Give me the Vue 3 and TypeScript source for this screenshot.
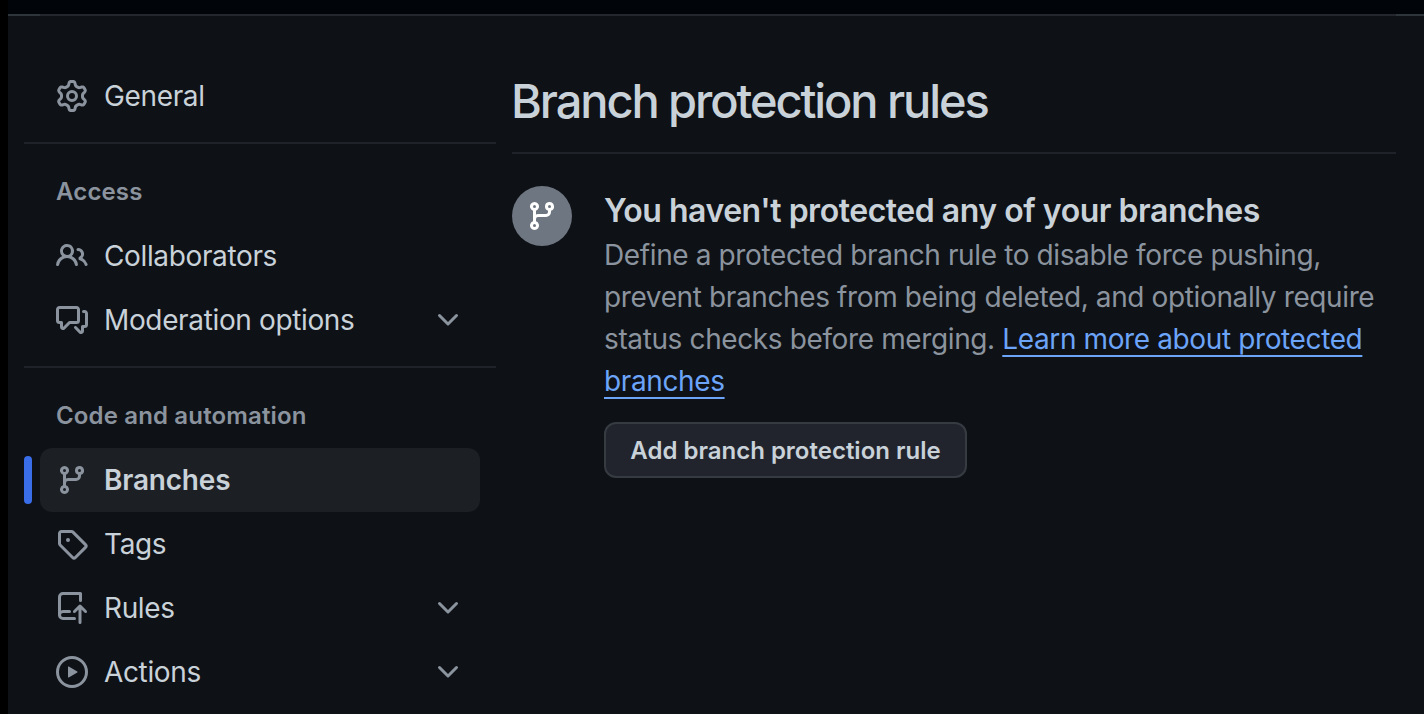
<script setup lang="ts">
interface NavItem {
  label: string
  icon: string
  expandable?: boolean
  active?: boolean
}
interface NavGroup {
  title?: string
  items: NavItem[]
}

const branch =
  'M9.5 3.25a2.25 2.25 0 1 1 3 2.122V6A2.5 2.5 0 0 1 10 8.5H6a1 1 0 0 0-1 1v1.128a2.251 2.251 0 1 1-1.5 0V5.372a2.25 2.25 0 1 1 1.5 0v1.836A2.493 2.493 0 0 1 6 7h4a1 1 0 0 0 1-1v-.628A2.25 2.25 0 0 1 9.5 3.25Zm-6 0a.75.75 0 1 0 1.5 0 .75.75 0 0 0-1.5 0Zm8.25-.75a.75.75 0 1 0 0 1.5.75.75 0 0 0 0-1.5ZM4.25 12a.75.75 0 1 0 0 1.5.75.75 0 0 0 0-1.5Z'
const gear =
  'M8 0a8.2 8.2 0 0 1 .701.031C9.444.095 9.99.645 10.16 1.29l.288 1.107c.018.066.079.158.212.224.231.114.454.243.668.386.123.082.233.09.299.071l1.103-.303c.644-.176 1.392.021 1.82.63.27.385.506.792.704 1.218.315.675.111 1.422-.364 1.891l-.814.806c-.049.048-.098.147-.088.294.016.257.016.515 0 .772-.01.147.038.246.088.294l.814.806c.475.469.679 1.216.364 1.891a7.977 7.977 0 0 1-.704 1.217c-.428.61-1.176.807-1.82.63l-1.102-.302c-.067-.019-.177-.011-.3.071a5.909 5.909 0 0 1-.668.386c-.133.066-.194.158-.211.224l-.29 1.106c-.168.646-.715 1.196-1.458 1.26a8.006 8.006 0 0 1-1.402 0c-.743-.064-1.289-.614-1.458-1.26l-.289-1.106c-.018-.066-.079-.158-.212-.224a5.738 5.738 0 0 1-.668-.386c-.123-.082-.233-.09-.299-.071l-1.103.303c-.644.176-1.392-.021-1.82-.63a8.12 8.12 0 0 1-.704-1.218c-.315-.675-.111-1.422.363-1.891l.815-.806c.05-.048.098-.147.088-.294a6.214 6.214 0 0 1 0-.772c.01-.147-.038-.246-.088-.294l-.815-.806C.635 6.045.431 5.298.746 4.623a7.92 7.92 0 0 1 .704-1.217c.428-.61 1.176-.807 1.82-.63l1.102.302c.067.019.177.011.3-.071.214-.143.437-.272.668-.386.133-.066.194-.158.211-.224l.29-1.106C6.009.645 6.556.095 7.299.03 7.53.01 7.764 0 8 0Zm-.571 1.525c-.036.003-.108.036-.137.146l-.289 1.105c-.147.561-.549.967-.998 1.189-.173.086-.34.183-.5.29-.417.278-.97.423-1.529.27l-1.103-.303c-.109-.03-.175.016-.195.045-.22.312-.412.644-.573.99-.014.031-.021.11.059.19l.815.806c.411.406.562.957.53 1.456a4.709 4.709 0 0 0 0 .582c.032.499-.119 1.05-.53 1.456l-.815.806c-.081.08-.073.159-.059.19.162.346.353.677.573.989.02.03.085.076.195.046l1.102-.303c.56-.153 1.113-.008 1.53.27.161.107.328.204.501.29.447.222.85.629.997 1.189l.289 1.105c.029.109.101.143.137.146a6.6 6.6 0 0 0 1.142 0c.036-.003.108-.036.137-.146l.289-1.105c.147-.561.549-.967.998-1.189.173-.086.34-.183.5-.29.417-.278.97-.423 1.529-.27l1.103.303c.109.029.175-.016.195-.045.22-.313.411-.644.573-.99.014-.031.021-.11-.059-.19l-.815-.806c-.411-.406-.562-.957-.53-1.456a4.709 4.709 0 0 0 0-.582c-.032-.499.119-1.05.53-1.456l.815-.806c.081-.08.073-.159.059-.19a6.464 6.464 0 0 0-.573-.989c-.02-.03-.085-.076-.195-.046l-1.102.303c-.56.153-1.113.008-1.53-.27a4.44 4.44 0 0 0-.501-.29c-.447-.222-.85-.629-.997-1.189l-.289-1.105c-.029-.11-.101-.143-.137-.146a6.6 6.6 0 0 0-1.142 0ZM11 8a3 3 0 1 1-6 0 3 3 0 0 1 6 0ZM9.5 8a1.5 1.5 0 1 0-3.001.001A1.5 1.5 0 0 0 9.5 8Z'
const people =
  'M2 5.5a3.5 3.5 0 1 1 5.898 2.549 5.508 5.508 0 0 1 3.034 4.084.75.75 0 1 1-1.482.235 4 4 0 0 0-7.9 0 .75.75 0 0 1-1.482-.236A5.507 5.507 0 0 1 3.102 8.05 3.493 3.493 0 0 1 2 5.5ZM11 4a3.001 3.001 0 0 1 2.22 5.018 5.01 5.01 0 0 1 2.56 3.012.749.749 0 0 1-.885.954.752.752 0 0 1-.549-.514 3.507 3.507 0 0 0-2.522-2.372.75.75 0 0 1-.574-.73v-.352a.75.75 0 0 1 .416-.672A1.5 1.5 0 0 0 11 5.5.75.75 0 0 1 11 4Zm-5.5-.5a2 2 0 1 0-.001 3.999A2 2 0 0 0 5.5 3.5Z'
const discussion =
  'M1.75 1h8.5c.966 0 1.75.784 1.75 1.75v5.5A1.75 1.75 0 0 1 10.25 10H7.061l-2.574 2.573A1.458 1.458 0 0 1 2 11.543V10h-.25A1.75 1.75 0 0 1 0 8.25v-5.5C0 1.784.784 1 1.75 1ZM1.5 2.75v5.5c0 .138.112.25.25.25h1a.75.75 0 0 1 .75.75v2.19l2.72-2.72a.749.749 0 0 1 .53-.22h3.5a.25.25 0 0 0 .25-.25v-5.5a.25.25 0 0 0-.25-.25h-8.5a.25.25 0 0 0-.25.25Zm13 2a.25.25 0 0 0-.25-.25h-.5a.75.75 0 0 1 0-1.5h.5c.966 0 1.75.784 1.75 1.75v5.5A1.75 1.75 0 0 1 14.25 12H14v1.543a1.458 1.458 0 0 1-2.487 1.03L9.22 12.28a.749.749 0 0 1 .326-1.275.749.749 0 0 1 .734.215l2.22 2.22v-2.19a.75.75 0 0 1 .75-.75h1a.25.25 0 0 0 .25-.25Z'
const tag =
  'M1 7.775V2.75C1 1.784 1.784 1 2.75 1h5.025c.464 0 .91.184 1.238.513l6.25 6.25a1.75 1.75 0 0 1 0 2.474l-5.026 5.026a1.75 1.75 0 0 1-2.474 0l-6.25-6.25A1.752 1.752 0 0 1 1 7.775Zm1.5 0c0 .066.026.13.073.177l6.25 6.25a.25.25 0 0 0 .354 0l5.025-5.025a.25.25 0 0 0 0-.354l-6.25-6.25a.25.25 0 0 0-.177-.073H2.75a.25.25 0 0 0-.25.25ZM6 5a1 1 0 1 1 0 2 1 1 0 0 1 0-2Z'
const repoPush =
  'M1 2.5A2.5 2.5 0 0 1 3.5 0h8.75a.75.75 0 0 1 .75.75v3.5a.75.75 0 0 1-1.5 0V1.5h-8a1 1 0 0 0-1 1v6.708A2.493 2.493 0 0 1 3.5 9h3.25a.75.75 0 0 1 0 1.5H3.5a1 1 0 0 0 0 2h5.75a.75.75 0 0 1 0 1.5H3.5A2.5 2.5 0 0 1 1 11.5Zm13.23 7.79-1.48-1.48v6.44a.75.75 0 0 1-1.5 0V8.81l-1.48 1.48a.749.749 0 0 1-1.275-.326.749.749 0 0 1 .215-.734l2.75-2.75a.75.75 0 0 1 1.06 0l2.75 2.75a.749.749 0 0 1-.326 1.275.749.749 0 0 1-.734-.215Z'
const play =
  'M8 0a8 8 0 1 1 0 16A8 8 0 0 1 8 0ZM1.5 8a6.5 6.5 0 1 0 13 0 6.5 6.5 0 0 0-13 0Zm4.879-2.773 4.264 2.559a.25.25 0 0 1 0 .428l-4.264 2.559A.25.25 0 0 1 6 10.559V5.442a.25.25 0 0 1 .379-.215Z'
const chevron =
  'M12.78 5.22a.749.749 0 0 1 0 1.06l-4.25 4.25a.749.749 0 0 1-1.06 0L3.22 6.28a.749.749 0 1 1 1.06-1.06L8 8.939l3.72-3.719a.749.749 0 0 1 1.06 0Z'

const groups: NavGroup[] = [
  { items: [{ label: 'General', icon: gear }] },
  {
    title: 'Access',
    items: [
      { label: 'Collaborators', icon: people },
      { label: 'Moderation options', icon: discussion, expandable: true },
    ],
  },
  {
    title: 'Code and automation',
    items: [
      { label: 'Branches', icon: branch, active: true },
      { label: 'Tags', icon: tag },
      { label: 'Rules', icon: repoPush, expandable: true },
      { label: 'Actions', icon: play, expandable: true },
    ],
  },
]
</script>

<template>
  <div class="screen">
    <header class="topbar"><div class="topbar-rule"></div></header>
    <div class="layout">
      <nav class="sidebar">
        <section v-for="(g, i) in groups" :key="i" class="group">
          <h2 v-if="g.title" class="group-title">{{ g.title }}</h2>
          <a v-for="it in g.items" :key="it.label" class="item" :class="{ active: it.active }">
            <svg class="icon" viewBox="0 0 16 16"><path :d="it.icon" /></svg>
            <span class="label">{{ it.label }}</span>
            <svg v-if="it.expandable" class="icon" viewBox="0 0 16 16"><path :d="chevron" /></svg>
          </a>
        </section>
      </nav>
      <main class="content">
        <h1 class="title">Branch protection rules</h1>
        <div class="blank">
          <span class="badge"><svg class="icon" viewBox="0 0 16 16"><path :d="branch" /></svg></span>
          <div class="body">
            <h3 class="heading">You haven't protected any of your branches</h3>
            <p class="text">
              Define a protected branch rule to disable force pushing,<br />
              prevent branches from being deleted, and optionally require<br />
              status checks before merging. <a class="link">Learn more about protected<br />branches</a>
            </p>
            <button class="btn" type="button">Add branch protection rule</button>
          </div>
        </div>
      </main>
    </div>
  </div>
</template>

<style>
body {
  background: #000;
}
</style>

<style scoped>
.screen {
  box-sizing: border-box;
  height: 714px;
  padding-left: 8px;
  overflow: hidden;
  display: flex;
  flex-direction: column;
  background: #000;
  font-family: Inter, "Liberation Sans", sans-serif;
  color: #c9d1d9;
}
.topbar {
  flex: none;
  box-sizing: border-box;
  height: 16px;
  padding: 14px 28px 0 32px;
  background: linear-gradient(#010409 14px, #2f363b 14px);
}
.topbar-rule {
  height: 2px;
  background: #24272d;
}
.layout {
  flex: 1;
  min-height: 0;
  display: flex;
  gap: 16px;
  padding: 48px 28px 0 16px;
  background: #0e1116;
}
.sidebar {
  flex: none;
  width: 472px;
}
.group + .group {
  margin-top: 14px;
  padding-top: 16px;
  border-top: 2px solid #1f2228;
}
.group-title {
  margin: 0;
  padding: 12px 32px;
  height: 40px;
  line-height: 40px;
  font-size: 24px;
  font-weight: 600;
  letter-spacing: 0.15px;
  color: #8b949e;
}
.item {
  position: relative;
  display: flex;
  align-items: center;
  gap: 16px;
  height: 64px;
  margin: 0 16px;
  padding: 0 16px;
  border-radius: 12px;
  font-size: 28px;
  font-weight: 440;
  line-height: 40px;
  letter-spacing: -0.36px;
}
.label {
  flex: 1;
}
.icon {
  flex: none;
  width: 32px;
  height: 32px;
  fill: #8b949e;
}
.active {
  background: #1c1f24;
  font-weight: 620;
  letter-spacing: -0.2px;
}
.active::before {
  content: "";
  position: absolute;
  left: -16px;
  top: 8px;
  width: 8px;
  height: 48px;
  border-radius: 4px;
  background: #3a6ee8;
}
.content {
  flex: 1;
  min-width: 0;
}
.title {
  margin: 0 0 0 -1px;
  height: 88px;
  line-height: 74px;
  font-size: 47px;
  font-weight: 450;
  letter-spacing: -2.1px;
}
.blank {
  display: flex;
  gap: 32px;
  padding-top: 32px;
  border-top: 2px solid #1f2228;
}
.badge {
  flex: none;
  display: flex;
  align-items: center;
  justify-content: center;
  width: 60px;
  height: 60px;
  border-radius: 50%;
  background: #6e7681;
}
.badge .icon {
  fill: #fff;
}
.heading {
  margin: 0;
  height: 48px;
  line-height: 50px;
  font-size: 32px;
  font-weight: 640;
  letter-spacing: -0.47px;
  white-space: nowrap;
}
.text {
  margin: 0 0 20px;
  font-size: 28px;
  font-weight: 420;
  line-height: 42px;
  letter-spacing: -0.38px;
  color: #8b949e;
  white-space: nowrap;
}
.link {
  color: #6ca4f8;
  text-decoration: underline;
  text-decoration-thickness: 2px;
  text-underline-offset: 6px;
}
.btn {
  display: block;
  box-sizing: border-box;
  height: 56px;
  width: 363px;
  padding: 1px 0 0;
  border: 2px solid #363b42;
  border-radius: 12px;
  background: #21242c;
  color: #c9d1d9;
  font: 600 24px/51px Inter, "Liberation Sans", sans-serif;
}
</style>
